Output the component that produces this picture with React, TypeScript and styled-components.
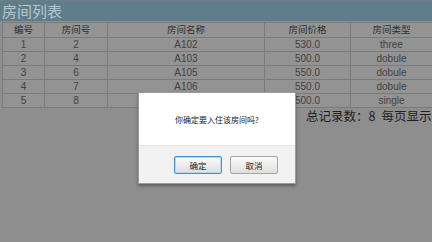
import React from "react";
import styled, { createGlobalStyle } from "styled-components";

const Global = createGlobalStyle`
  html, body { margin: 0; padding: 0; }
  body {
    width: 432px; height: 242px; overflow: hidden;
    background: #8e8e8e;
    font-family: "Liberation Sans", "Noto Sans CJK SC", sans-serif;
  }
`;

const Page = styled.div`
  position: relative;
  width: 432px;
  height: 242px;
  overflow: hidden;
  background: #8e8e8e;
`;

const TitleBar = styled.div`
  height: 20px;
  border-top: 1px solid #6f7d83;
  background: #5f7e8b;
  color: #b7c6cd;
  font-size: 15px;
  line-height: 20px;
  padding-left: 2px;
  font-family: "Noto Sans CJK SC", sans-serif;
`;

const Table = styled.table`
  margin: 1px 0 0 2px;
  width: 430px;
  border-collapse: collapse;
  table-layout: fixed;
  background: #939393;
  font-family: "Liberation Sans", "Noto Sans CJK SC", sans-serif;
  color: #424242;
`;

const Th = styled.th`
  height: 14px;
  padding: 0;
  font-weight: normal;
  font-size: 9.5px;
  line-height: 14px;
  text-align: center;
  border: 1px solid #7b7b7b;
  color: #2e2e2e;
  background: #949494;
`;

const Td = styled.td`
  height: 13px;
  padding: 0;
  font-size: 10px;
  line-height: 13px;
  text-align: center;
  border: 1px solid #7b7b7b;
`;

const Summary = styled.div`
  padding-left: 306px;
  margin-top: 0;
  white-space: nowrap;
  font-size: 12.5px;
  line-height: 16px;
  color: #1f1f1f;
  font-family: "Noto Sans CJK SC", sans-serif;
`;

const Gap = styled.span`
  display: inline-block;
  width: 6px;
`;

const Dialog = styled.div`
  position: absolute;
  left: 138px;
  top: 92px;
  width: 156px;
  height: 90px;
  background: #ffffff;
  border: 1px solid #9a9a9a;
  box-shadow: 0 2px 3px rgba(0, 0, 0, 0.35);
  display: flex;
  flex-direction: column;
`;

const DialogBody = styled.div`
  height: 51px;
  display: flex;
  align-items: center;
  justify-content: center;
  font-size: 8px;
  color: #222;
  font-family: "Noto Sans CJK SC", sans-serif;
  padding-top: 1px;
`;

const DialogFooter = styled.div`
  flex: 1;
  background: #f2f2f2;
  border-top: 1px solid #e4e4e4;
  display: flex;
  align-items: center;
  justify-content: center;
  gap: 8px;
  padding-left: 18px;
  padding-top: 1px;
`;

const Button = styled.button<{ $primary?: boolean }>`
  width: 48px;
  height: 18px;
  padding: 0;
  font-size: 8.5px;
  font-family: "Noto Sans CJK SC", sans-serif;
  color: #222;
  background: linear-gradient(#fbfbfb, #dedede);
  border: 1px solid ${(p) => (p.$primary ? "#4a8cc4" : "#a5a5a5")};
  border-radius: 2px;
  box-shadow: ${(p) => (p.$primary ? "inset 0 0 0 1px #b8d6ef" : "none")};
`;

const rows = [
  ["1", "2", "A102", "530.0", "three"],
  ["2", "4", "A103", "500.0", "dobule"],
  ["3", "6", "A105", "550.0", "dobule"],
  ["4", "7", "A106", "550.0", "dobule"],
  ["5", "8", "A108", "500.0", "single"],
];

export default function App() {
  return (
    <Page>
      <Global />
      <TitleBar>房间列表</TitleBar>
      <Table>
        <colgroup>
          <col style={{ width: 42 }} />
          <col style={{ width: 63 }} />
          <col style={{ width: 157 }} />
          <col style={{ width: 86 }} />
          <col style={{ width: 82 }} />
        </colgroup>
        <thead>
          <tr>
            <Th>编号</Th>
            <Th>房间号</Th>
            <Th>房间名称</Th>
            <Th>房间价格</Th>
            <Th>房间类型</Th>
          </tr>
        </thead>
        <tbody>
          {rows.map((r) => (
            <tr key={r[0]}>
              {r.map((c, i) => (
                <Td key={i}>{c}</Td>
              ))}
            </tr>
          ))}
        </tbody>
      </Table>
      <Summary>
        总记录数：8<Gap />每页显示
      </Summary>
      <Dialog>
        <DialogBody>你确定要入住该房间吗?</DialogBody>
        <DialogFooter>
          <Button $primary>确定</Button>
          <Button>取消</Button>
        </DialogFooter>
      </Dialog>
    </Page>
  );
}
